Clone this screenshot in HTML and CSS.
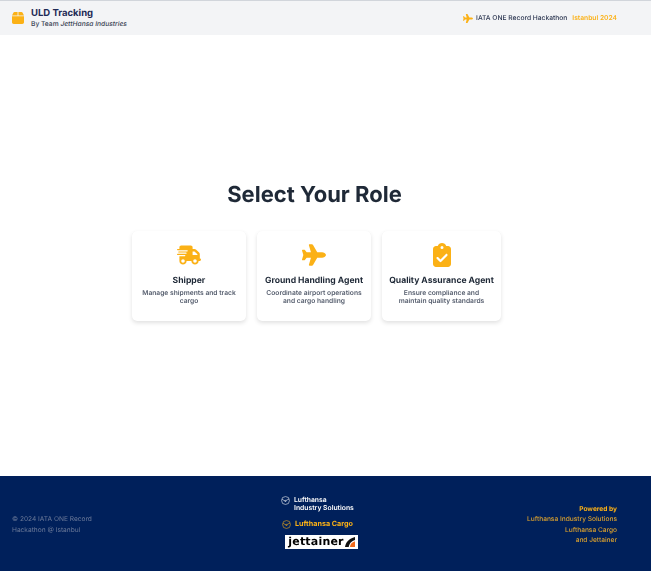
FILE: index.html
```html
<!DOCTYPE html>
<html lang="en">
<head>
<meta charset="utf-8">
<title>ULD Tracking</title>
<link rel="stylesheet" href="styles.css">
</head>
<body>
<div class="page">
  <header class="header">
    <div class="brand">
      <svg class="brand-icon" viewBox="0 0 448 512"><path d="M50.7 58.5L0 160H208V32H93.7C75.5 32 58.9 42.3 50.7 58.5zM240 160H448L397.3 58.5C389.1 42.3 372.5 32 354.3 32H240V160zm208 32H0V416c0 35.3 28.7 64 64 64H384c35.3 0 64-28.7 64-64V192z"/></svg>
      <div>
        <div class="brand-title">ULD Tracking</div>
        <div class="brand-sub">By Team <em>JettHansa Industries</em></div>
      </div>
    </div>
    <div class="event">
      <svg class="event-icon" viewBox="0 0 576 512"><path d="M482.3 192c34.2 0 93.7 29 93.7 64c0 36-59.5 64-93.7 64l-116.6 0L265.2 495.9c-5.7 10-16.3 16.1-27.8 16.1l-56.2 0c-10.6 0-18.3-10.2-15.4-20.4l49-171.6L112 320 68.8 377.6c-3 4-7.8 6.4-12.8 6.4l-42 0c-7.8 0-14-6.3-14-14c0-1.3 .2-2.6 .5-3.9L32 256 .5 145.9c-.4-1.3-.5-2.6-.5-3.9c0-7.8 6.3-14 14-14l42 0c5 0 9.8 2.4 12.8 6.4L112 192l102.9 0-49-171.6C162.9 10.2 170.6 0 181.2 0l56.2 0c11.5 0 22.1 6.2 27.8 16.1L365.7 192l116.6 0z"/></svg>
      <span class="event-name">IATA ONE Record Hackathon</span>
      <span class="event-place">Istanbul 2024</span>
    </div>
  </header>

  <main class="main">
    <h1 class="heading">Select Your Role</h1>
    <div class="cards">
      <div class="card">
        <svg class="card-icon" viewBox="0 0 640 512"><path d="M112 0C85.5 0 64 21.5 64 48V96H16c-8.8 0-16 7.2-16 16s7.2 16 16 16H64 272c8.8 0 16 7.2 16 16s-7.2 16-16 16H64 48c-8.8 0-16 7.2-16 16s7.2 16 16 16H64 240c8.8 0 16 7.2 16 16s-7.2 16-16 16H64 16c-8.8 0-16 7.2-16 16s7.2 16 16 16H64 208c8.8 0 16 7.2 16 16s-7.2 16-16 16H64V416c0 53 43 96 96 96s96-43 96-96H384c0 53 43 96 96 96s96-43 96-96h32c17.7 0 32-14.3 32-32s-14.3-32-32-32V288 256 237.3c0-17-6.7-33.3-18.7-45.3L512 114.7c-12-12-28.3-18.7-45.3-18.7H416V48c0-26.5-21.5-48-48-48H112zM544 237.3V256H416V160h50.7L544 237.3zM160 368a48 48 0 1 1 0 96 48 48 0 1 1 0-96zm272 48a48 48 0 1 1 96 0 48 48 0 1 1 -96 0z"/></svg>
        <h2 class="card-title">Shipper</h2>
        <p class="card-text">Manage shipments and track cargo</p>
      </div>
      <div class="card">
        <svg class="card-icon" viewBox="0 0 576 512"><path d="M482.3 192c34.2 0 93.7 29 93.7 64c0 36-59.5 64-93.7 64l-116.6 0L265.2 495.9c-5.7 10-16.3 16.1-27.8 16.1l-56.2 0c-10.6 0-18.3-10.2-15.4-20.4l49-171.6L112 320 68.8 377.6c-3 4-7.8 6.4-12.8 6.4l-42 0c-7.8 0-14-6.3-14-14c0-1.3 .2-2.6 .5-3.9L32 256 .5 145.9c-.4-1.3-.5-2.6-.5-3.9c0-7.8 6.3-14 14-14l42 0c5 0 9.8 2.4 12.8 6.4L112 192l102.9 0-49-171.6C162.9 10.2 170.6 0 181.2 0l56.2 0c11.5 0 22.1 6.2 27.8 16.1L365.7 192l116.6 0z"/></svg>
        <h2 class="card-title">Ground Handling Agent</h2>
        <p class="card-text">Coordinate airport operations and cargo handling</p>
      </div>
      <div class="card card-wide">
        <svg class="card-icon" viewBox="0 0 384 512"><path d="M192 0c-41.8 0-77.4 26.7-90.5 64H64C28.7 64 0 92.7 0 128V448c0 35.3 28.7 64 64 64H320c35.3 0 64-28.7 64-64V128c0-35.3-28.7-64-64-64H282.5C269.4 26.7 233.8 0 192 0zm0 64a32 32 0 1 1 0 64 32 32 0 1 1 0-64zM305 273L177 401c-9.4 9.4-24.6 9.4-33.9 0L79 337c-9.4-9.4-9.4-24.6 0-33.9s24.6-9.4 33.9 0l47 47L271 239c9.4-9.4 24.6-9.4 33.9 0s9.4 24.6 0 33.9z"/></svg>
        <h2 class="card-title">Quality Assurance Agent</h2>
        <p class="card-text">Ensure compliance and<br>maintain quality standards</p>
      </div>
    </div>
  </main>

  <footer class="footer">
    <div class="copy">© 2024 IATA ONE Record<br>Hackathon @ Istanbul</div>
    <div class="logos">
      <div class="logo-lis">
        <svg class="crane crane-white" viewBox="0 0 24 24"><circle cx="12" cy="12" r="10.5"/><path d="M2.500 9l6.500 3 5-.5 7.500-3.500M9 12l3 4 2-4.500"/></svg>
        <div class="lis-text">Lufthansa<br>Industry Solutions</div>
      </div>
      <div class="logo-cargo">
        <svg class="crane crane-gold" viewBox="0 0 24 24"><circle cx="12" cy="12" r="10.5"/><path d="M2.500 9l6.500 3 5-.5 7.500-3.500M9 12l3 4 2-4.500"/></svg>
        <span>Lufthansa Cargo</span>
      </div>
      <div class="logo-jet">
        <span>jettainer</span>
        <svg class="jet-mark" viewBox="0 0 12 12"><path d="M0 12C1 6 5 2 12 0v3.500C8 4.500 5 8 4.500 12z"/><path class="jet-dot" d="M6 12c0-3 2-6 6-7v7z"/></svg>
      </div>
    </div>
    <div class="powered">
      <strong>Powered by</strong><br>Lufthansa Industry Solutions<br>Lufthansa Cargo<br>and Jettainer
    </div>
  </footer>
</div>
</body>
</html>
```
FILE: styles.css
```css
* { box-sizing: border-box; }
html, body { margin: 0; padding: 0; background: #fff; }
body { font-family: Inter, "Liberation Sans", sans-serif; text-rendering: geometricPrecision; }
.page { height: 573px; display: flex; flex-direction: column; padding-bottom: 2px; overflow: hidden; will-change: opacity; }

.header {
  height: 35px;
  flex: none;
  background: #f3f4f6;
  border-top: 1px solid #d1d5db;
  display: flex;
  align-items: center;
  justify-content: space-between;
  padding: 0 34px 0 12px;
}
.brand { display: flex; align-items: center; gap: 7px; }
.brand-icon { width: 12px; height: 14px; fill: #fbb116; }
.brand-title { font-size: 9.5px; font-weight: 700; color: #1e2a55; line-height: 12px; }
.brand-sub { font-size: 6.7px; font-weight: 500; color: #374151; line-height: 8px; }
.event { display: flex; align-items: center; font-size: 6.7px; font-weight: 500; }
.event-icon { width: 10px; height: 9px; fill: #fbb116; margin-right: 3px; }
.event-name { color: #2b3550; margin-right: 5px; }
.event-place { color: #fbb116; font-weight: 600; }

.main { flex: 1; display: flex; flex-direction: column; align-items: center; padding: 145px 18px 0 0; }
.heading { margin: 0 4px 21px 0; font-size: 22px; line-height: 30px; font-weight: 700; color: #1f2937; }
.cards { display: flex; gap: 11px; }
.card {
  width: 114px;
  height: 90px;
  background: #fff;
  border-radius: 5px;
  box-shadow: 0 2px 4px rgba(0,0,0,.12), 0 0 1px rgba(0,0,0,.05);
  display: flex;
  flex-direction: column;
  align-items: center;
  padding: 12px 6px 0;
  text-align: center;
}
.card-wide { width: 119px; }
.card-icon { height: 24px; width: 24px; fill: #fbb116; flex: none; }
.card-title { margin: 8px 0 2px; font-size: 8.6px; line-height: 12px; font-weight: 700; color: #1f2937; white-space: nowrap; }
.card-text { margin: 0; font-size: 6.7px; line-height: 8px; font-weight: 600; color: #565e6e; }

.footer {
  height: 95px;
  flex: none;
  background: #00205b;
  display: grid;
  grid-template-columns: 1fr auto 1fr;
  align-items: center;
  padding: 2px 34px 0 12px;
}
.copy { font-size: 6.6px; line-height: 10.2px; color: #6b7a99; }
.logos { display: flex; flex-direction: column; gap: 8px; padding: 0 0 5px 10px; }
.logo-lis { display: flex; align-items: flex-start; gap: 4px; }
.crane { width: 9px; height: 9px; fill: none; stroke-width: 1.5; flex: none; }
.crane-white { stroke: #fff; }
.crane-gold { stroke: #fbb116; }
.lis-text { color: #fff; font-size: 6.8px; line-height: 8px; font-weight: 600; }
.logo-cargo { display: flex; align-items: center; gap: 4px; color: #fbb116; font-size: 7.2px; line-height: 8px; font-weight: 700; margin-left: 1px; }
.logo-jet {
  width: 73px;
  height: 14px;
  margin: -2px 0 0 4px;
  background: #fff;
  display: flex;
  align-items: center;
  justify-content: center;
  gap: 1px;
  color: #000;
  font-family: "DejaVu Sans", sans-serif;
  font-size: 11px;
  letter-spacing: .2px;
  font-weight: 700;
}
.jet-mark { width: 10px; height: 10px; fill: #111; }
.jet-dot { fill: #f26a1b; }
.powered { text-align: right; font-size: 6.6px; line-height: 10.2px; color: #d9a02e; font-weight: 500; }
.powered strong { font-weight: 700; color: #fbb116; }
```
